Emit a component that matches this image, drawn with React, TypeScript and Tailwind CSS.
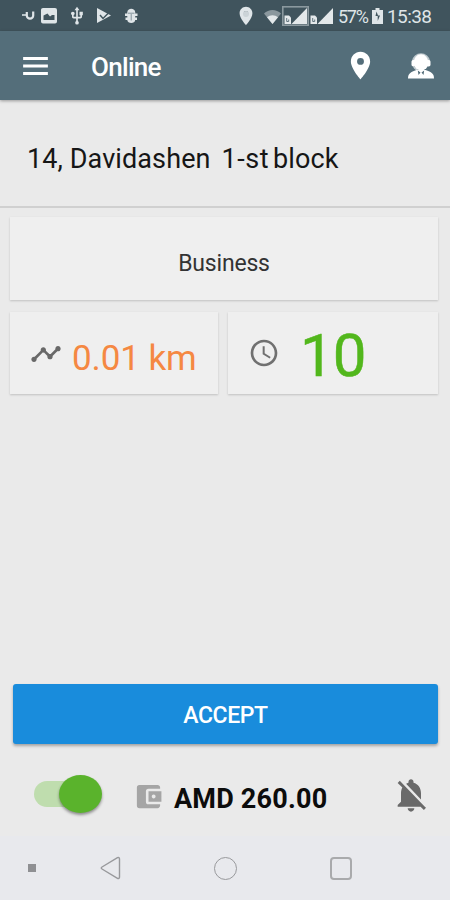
import React from 'react';
import { MdAccessTime, MdAccountBalanceWallet, MdMenu, MdNotificationsOff, MdPlace, MdTimeline, MdUsb } from 'react-icons/md';

// --- Status bar drawings ---
const NotificationIcons = () => (
  <svg width="118" height="24" viewBox="0 0 118 24" fill="#dfe5e8">
    <path d="M0 11h4" stroke="#b9c4c9" strokeWidth="2" />
    <path d="M4.800 8v3.500a3.200 3.200 0 0 0 6.400 0V7.500" fill="none" stroke="#dfe5e8" strokeWidth="2.200" />
    <path fillRule="evenodd" d="M21 4h12a2 2 0 0 1 2 2v11.500a2 2 0 0 1-2 2H21a2 2 0 0 1-2-2V6c0-1.100.9-2 2-2zm.500 12h11v-5h-2.500l-2 1.500-2.500-3-4 2z" />
    <path d="M75 4l14 7.500L75 19z" />
    <path d="M78 11l3 3.500 7-7" fill="none" stroke="#40545d" strokeWidth="1.500" />
    <path d="M103 9.500h12.500v2.500H103zm.500 4H115V16h-11.500z" />
    <path d="M105.300 8.500c0-5 7.900-5 7.900 0V16c0 4-7.900 4-7.900 0z" />
    <path d="M106 9.200h6.500M109.200 10v6.500" stroke="#82919a" strokeWidth="1" />
  </svg>
);

const WifiIcon = () => (
  <svg width="17" height="15" viewBox="0 0 17 15">
    <path d="M0 4.500C4.500-.3 12.500-.3 17 4.500L8.500 15z" fill="#8b989e" />
    <path d="M3 8.200C6 5.500 11 5.500 14 8.200L8.500 15z" fill="#e3e8ea" />
  </svg>
);

const SignalIcon = ({ boxed }: { boxed?: boolean }) => (
  <svg width="27" height="20" viewBox="0 0 27 20">
    {boxed && <rect x=".8" y=".8" width="25.400" height="18.400" fill="none" stroke="#8b999f" strokeWidth="1.600" />}
    <path d="M25 2v16H9.500z" fill="#e3e8ea" />
    <path d="M2.500 9.500h4.500l2 2V18H2.500z" fill="#e3e8ea" />
    <path d="M4.700 12v3.500h2v-2" fill="none" stroke="#62757e" strokeWidth="1" />
  </svg>
);

const BatteryIcon = () => (
  <svg width="11" height="16" viewBox="0 0 11 16">
    <path d="M3.500 0h4v2H11v14H0V2h3.500z" fill="#dfe5e8" />
    <path d="M4.500 3.500L3.500 8h2.200v5L8 7.500H6z" fill="#40545d" />
  </svg>
);

const OperatorIcon = () => (
  <svg width="26" height="27" viewBox="0 0 26 27">
    <path d="M4.800 9.500a8.300 8.500 0 0 1 16.400 0" fill="none" stroke="#bcc7cc" strokeWidth="2" />
    <ellipse cx="13" cy="10.500" rx="7.500" ry="8.300" fill="#fff" />
    <rect x="3.500" y="8" width="4" height="6.500" rx="1.800" fill="#fff" />
    <rect x="18.500" y="8" width="4" height="6.500" rx="1.800" fill="#fff" />
    <path d="M5.500 14c1 2.500 3 4 5 4" fill="none" stroke="#c8d1d5" strokeWidth="1.400" />
    <path d="M0 26.500c0-5 2.500-6.500 8.500-8.500h9c6 2 8.500 3.500 8.500 8.500z" fill="#fff" />
    <path d="M9.800 18.500l.7 4.500 2-2.500zm6.400 0l-.7 4.500-2-2.500z" fill="#546e7a" />
  </svg>
);

const StatusBar = () => (
  <div className="flex h-[31px] items-center bg-[#40545d] pl-[22px] text-[#dfe5e8]">
    <div className="relative flex h-[31px] shrink-0 items-center">
      <NotificationIcons />
      <MdUsb size={20} className="absolute left-[45px] top-[6px]" />
    </div>
    <div className="relative ml-[95px] mt-px shrink-0">
      <MdPlace size={22} />
      <span className="absolute left-[8px] top-[6px] h-[6px] w-[6px] rounded-full bg-[#cbd3d7]" />
    </div>
    <div className="ml-[7px] mt-px shrink-0"><WifiIcon /></div>
    <div className="ml-px shrink-0"><SignalIcon boxed /></div>
    <div className="-ml-px shrink-0"><SignalIcon /></div>
    <span className="ml-[3px] mt-[2px] w-[35px] shrink-0 whitespace-nowrap text-[18px] leading-none tracking-[-1.3px]">57%</span>
    <div className="-ml-px mt-px shrink-0"><BatteryIcon /></div>
    <span className="ml-[4px] mt-[2px] whitespace-nowrap text-[19px] leading-none tracking-[-0.6px]">15:38</span>
  </div>
);

const Header = () => (
  <header className="relative flex h-[69px] items-center bg-[#546e7a] pl-[19px] text-white shadow-[0_1px_3px_rgba(0,0,0,0.35)]">
    <MdMenu className="h-[36px] w-[33px]" preserveAspectRatio="none" />
    <h1 className="ml-[39px] mt-[3px] text-[26px] font-medium leading-none tracking-[-0.7px]">Online</h1>
    <MdPlace size={33} className="ml-auto" />
    <div className="ml-[31px] mr-[16px]"><OperatorIcon /></div>
  </header>
);

const NavBar = () => (
  <nav className="flex h-[64px] items-center bg-[#e8e9ed] pl-[28px]">
    <div className="h-[8px] w-[8px] bg-[#8f9093]" />
    <svg className="ml-[64px]" width="21" height="24" viewBox="0 0 21 24" fill="none" stroke="#98999c" strokeWidth="1.400">
      <path d="M17.500 1.700L2 11c-1 .6-1 1.400 0 2l15.500 9.300c1 .6 2 0 2-1V2.700c0-1-1-1.600-2-1z" />
    </svg>
    <div className="ml-[93px] h-[23px] w-[23px] rounded-full border-[1.500px] border-[#98999c]" />
    <div className="ml-[93px] h-[23px] w-[22px] rounded-[4px] border-2 border-[#a9aaac]" />
  </nav>
);

const App: React.FC = () => {
  return (
    <div className="flex h-[900px] w-[450px] flex-col overflow-hidden bg-[#eaeaea] font-['Roboto',sans-serif]">
      <StatusBar />
      <Header />

      {/* Pickup address */}
      <section className="flex h-[108px] items-center whitespace-nowrap border-b-2 border-[#d0d0d0] pl-[27px] pt-[12px] text-[27px] leading-none tracking-[0.1px] text-[#161616]">
        <span>14, Davidashen</span>
        <span className="ml-[11px] tracking-[0.5px]">1-st</span>
        <span className="ml-[4px]">block</span>
      </section>

      <main className="flex flex-1 flex-col px-[10px] pt-[9px]">
        <div className="mr-[2px] flex h-[83px] items-center justify-center bg-[#efefef] pt-[11px] text-[23px] tracking-[-0.2px] text-[#333] shadow-[0_1px_2px_rgba(0,0,0,0.18)]">
          Business
        </div>
        <div className="mr-[2px] mt-[12px] flex h-[82px] gap-[10px]">
          <div className="flex w-[208px] items-center bg-[#efefef] pl-[20px] shadow-[0_1px_2px_rgba(0,0,0,0.18)]">
            <MdTimeline size={32} className="mt-px text-[#686868]" />
            <span className="ml-[10px] mt-[10px] whitespace-nowrap text-[35px] leading-none tracking-[-0.1px] text-[#f58842]">0.01 km</span>
          </div>
          <div className="flex flex-1 items-center bg-[#efefef] pl-[20px] shadow-[0_1px_2px_rgba(0,0,0,0.18)]">
            <MdAccessTime size={32} className="text-[#707070]" />
            <span className="ml-[20px] mt-[6px] text-[60px] leading-none tracking-[-1px] text-[#52b71c] [-webkit-text-stroke:0.5px_#52b71c]">10</span>
          </div>
        </div>
      </main>

      <button className="ml-[13px] mr-[12px] flex h-[60px] shrink-0 items-center justify-center rounded-[3px] bg-[#198cdc] pt-[4px] text-[23px] font-medium tracking-[-0.4px] text-white shadow-[0_2px_3px_rgba(0,0,0,0.3)]">
        ACCEPT
      </button>

      {/* Availability and balance */}
      <footer className="flex h-[92px] shrink-0 items-center pl-[34px] pt-[7px]">
        <div className="flex h-[26px] w-[68px] items-center justify-end rounded-full bg-[linear-gradient(90deg,#bfddae_70%,transparent_70%)]">
          <div className="h-[38px] w-[43px] shrink-0 rounded-[50%] bg-[#5ab32c] shadow-[0_2px_3px_rgba(0,0,0,0.4)]" />
        </div>
        <MdAccountBalanceWallet size={31} className="ml-[31px] mt-[6px] text-[#a5a5a5]" />
        <span className="ml-[10px] mt-[11px] whitespace-nowrap text-[27px] font-bold leading-none tracking-[0.2px] text-[#0c0c0c]">AMD 260.00</span>
        <MdNotificationsOff size={40} className="ml-auto mr-[19px] mt-[2px] text-[#6a6a6a]" />
      </footer>

      <NavBar />
    </div>
  );
};

export default App;
